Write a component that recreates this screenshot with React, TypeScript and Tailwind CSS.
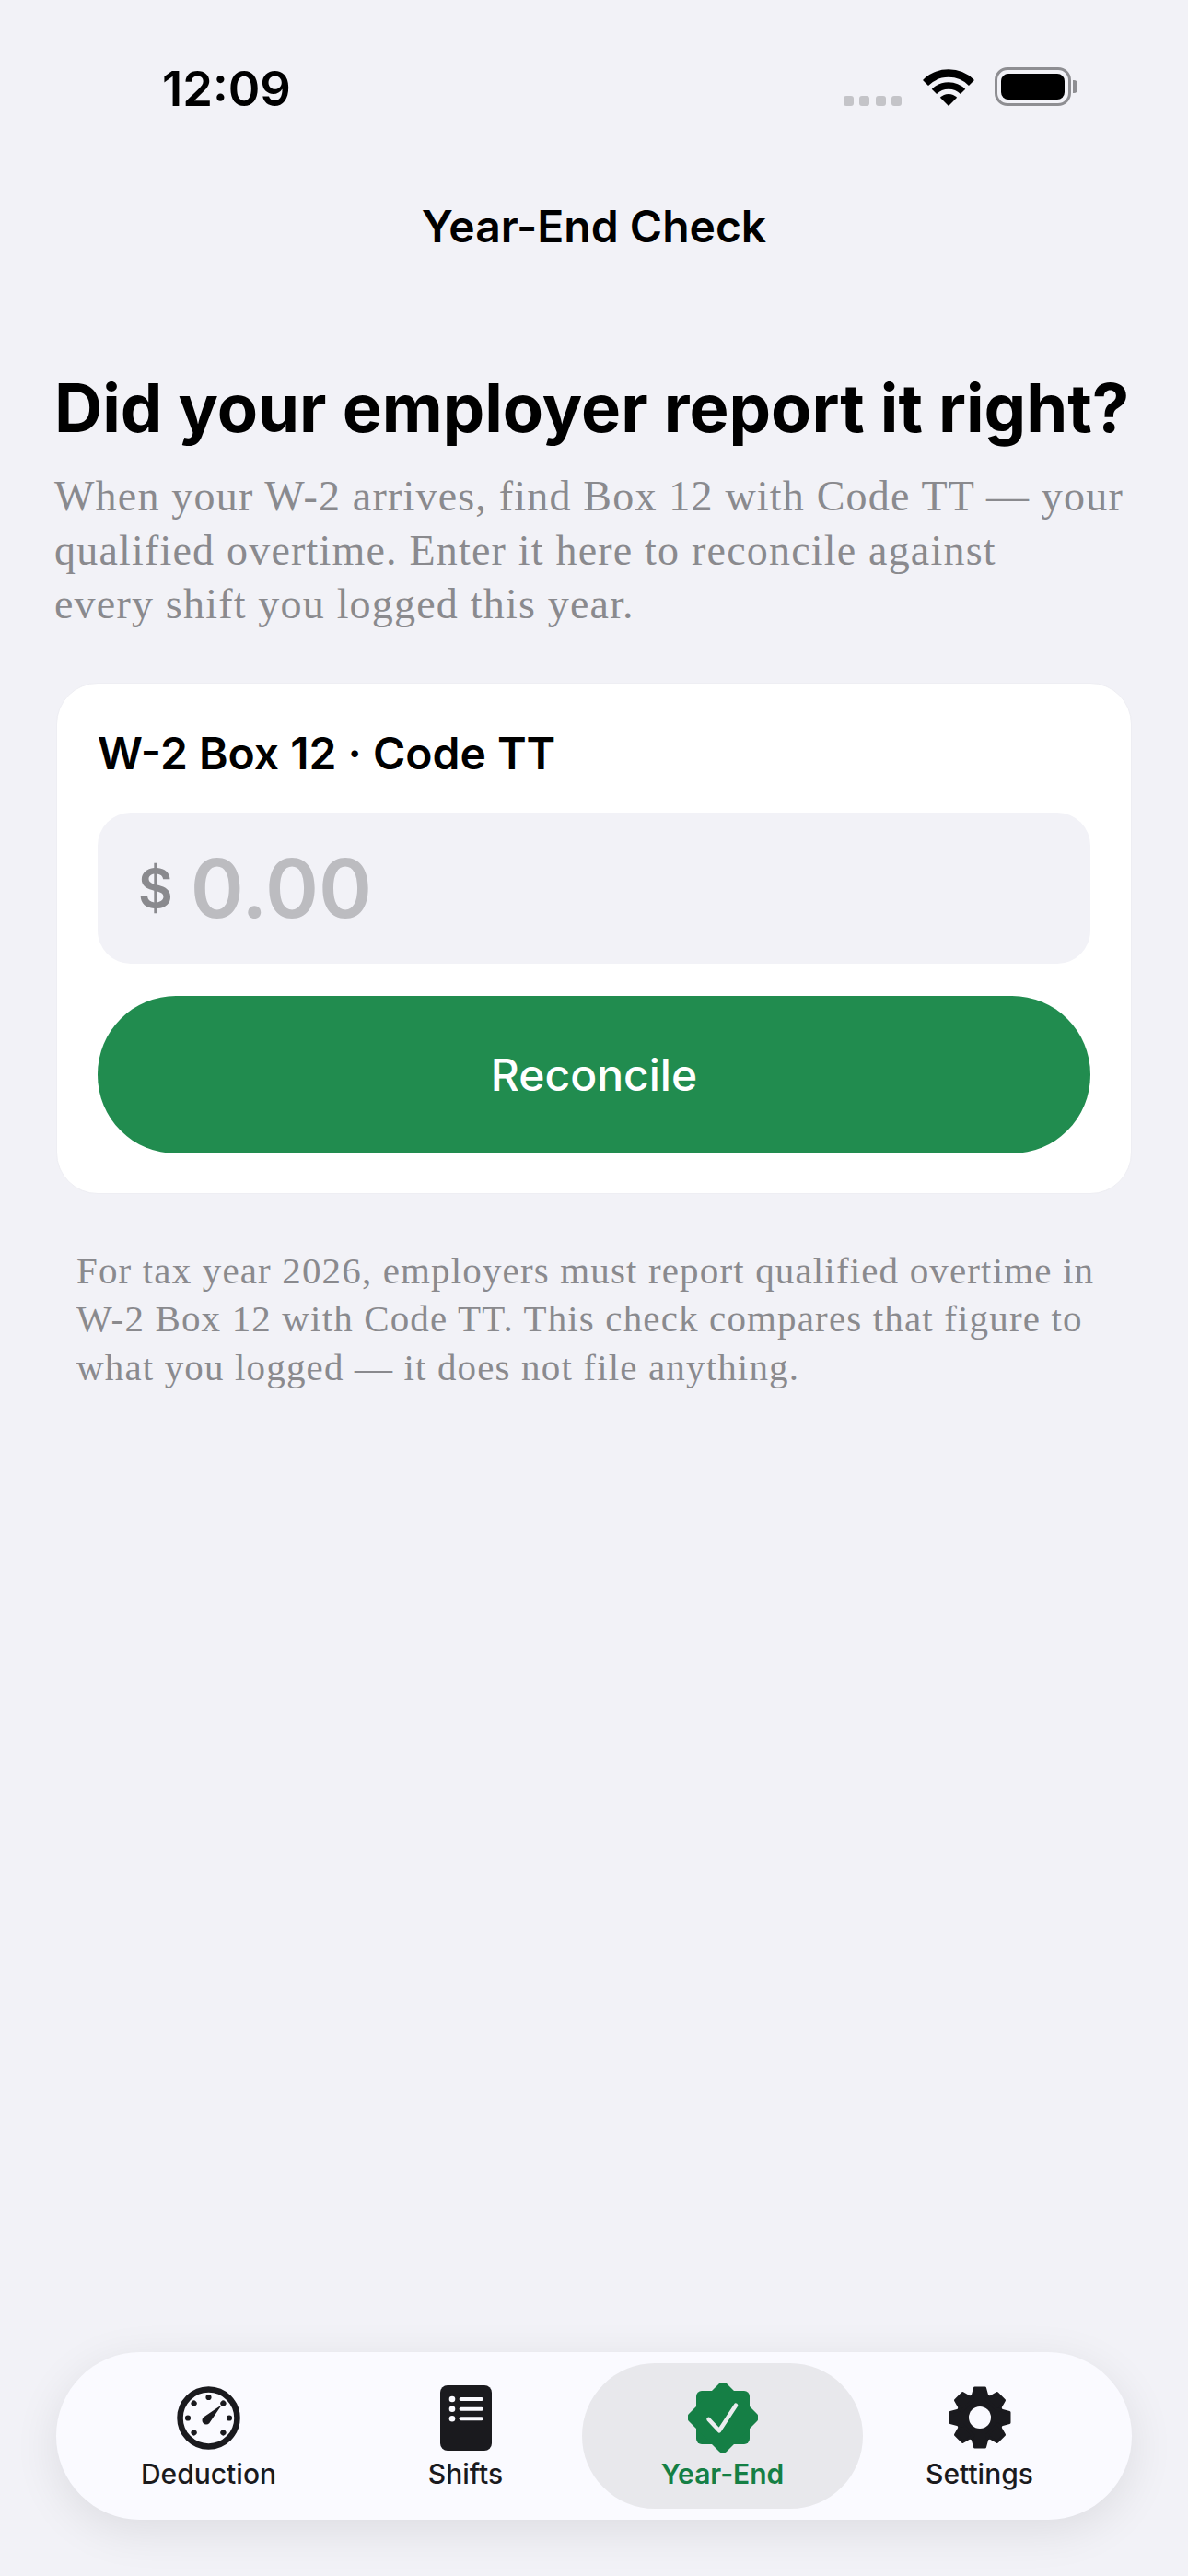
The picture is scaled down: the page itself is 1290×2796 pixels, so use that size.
const sans = "font-['Inter',sans-serif]";

const DIAL_DOTS = [0, 45, 90, 135, 225, 270, 315];
const GEAR_TEETH = [0, 45, 90, 135, 180, 225, 270, 315];

function GaugeIcon() {
  return (
    <svg width="69" height="69" viewBox="0 0 69 69">
      <circle cx="34.5" cy="34.5" r="31" fill="none" stroke="#1a1a1e" strokeWidth="6.5" />
      {DIAL_DOTS.map((a) => (
        <circle key={a} cx="34.5" cy="12" r="3.1" fill="#1a1a1e" transform={`rotate(${a} 34.5 34.5)`} />
      ))}
      <path d="M49 20 L35.2 40.2 A4.5 4.5 0 0 1 28.8 33.8 Z" fill="#1a1a1e" />
    </svg>
  );
}

function ListIcon() {
  return (
    <svg width="56" height="71" viewBox="0 0 56 71">
      <rect width="56" height="71" rx="8" fill="#1a1a1e" />
      {[15, 25.7, 36.3].map((y) => (
        <g key={y}>
          <circle cx="13" cy={y} r="3.3" fill="#fafaff" />
          <rect x="20.6" y={y - 2} width="26.4" height="4" rx="2" fill="#fafaff" />
        </g>
      ))}
    </svg>
  );
}

function BadgeIcon() {
  return (
    <svg width="76" height="76" viewBox="0 0 76 76">
      <rect x="9" y="9" width="58" height="58" rx="6" fill="#157f45" />
      <rect x="9" y="9" width="58" height="58" rx="6" fill="#157f45" transform="rotate(45 38 38)" />
      <path d="M22.5 40 L34 52.3 L52 24.7" fill="none" stroke="#ececef" strokeWidth="4.5" strokeLinecap="round" strokeLinejoin="round" />
    </svg>
  );
}

function GearIcon() {
  return (
    <svg width="70" height="70" viewBox="0 0 70 70">
      <circle cx="35" cy="35" r="26" fill="#1a1a1e" />
      {GEAR_TEETH.map((a) => (
        <path
          key={a}
          d="M26 16 L29.5 3 H40.5 L44 16 Z"
          fill="#1a1a1e"
          stroke="#1a1a1e"
          strokeWidth="3"
          strokeLinejoin="round"
          transform={`rotate(${a} 35 35)`}
        />
      ))}
      <circle cx="35" cy="35" r="12" fill="#fafaff" />
    </svg>
  );
}

function StatusBar() {
  return (
    <div className="flex h-[126px] items-start justify-between pl-[176px] pr-[120px] pt-[65px]">
      <span className={`${sans} text-[52.5px] font-semibold leading-[62px] text-black`}>12:09</span>
      <div className="mt-[8px] flex items-end">
        <div className="flex gap-[6.5px]">
          <span className="h-[11px] w-[11px] rounded-[3px] bg-[#c4c4c8]" />
          <span className="h-[11px] w-[11px] rounded-[3px] bg-[#c4c4c8]" />
          <span className="h-[11px] w-[11px] rounded-[3px] bg-[#c4c4c8]" />
          <span className="h-[11px] w-[11px] rounded-[3px] bg-[#c4c4c8]" />
        </div>
        <svg className="ml-[23px]" width="56" height="41" viewBox="0 0 56 41">
          <path d="M3 15.9 A35.5 35.5 0 0 1 53 15.9" fill="none" stroke="#000" strokeWidth="8.5" />
          <path d="M12.4 25.4 A22 22 0 0 1 43.6 25.4" fill="none" stroke="#000" strokeWidth="7.5" />
          <path d="M28 41 L18.8 31.8 A13 13 0 0 1 37.2 31.8 Z" fill="#000" />
        </svg>
        <div className="ml-[22px] flex items-center">
          <div className="h-[42px] w-[83px] rounded-[14px] border-[3px] border-[#8e8e92] p-[4px]">
            <div className="h-full w-full rounded-[8px] bg-black" />
          </div>
          <span className="ml-[2px] h-[14px] w-[5px] rounded-r-[4px] bg-[#8e8e92]" />
        </div>
      </div>
    </div>
  );
}

function TabBar() {
  return (
    <div className="mx-[61px] mb-[61px] mt-auto grid h-[182px] grid-cols-4 items-stretch rounded-[91px] bg-[#fafaff] px-[26px] py-[12px] shadow-[0_12px_50px_rgba(0,0,0,0.09)]">
      <div className="flex flex-col items-center pt-[21px]">
        <div className="flex h-[76px] items-center"><GaugeIcon /></div>
        <span className={`${sans} mt-[3px] text-[30px] font-medium leading-[40px] text-[#1a1a1e]`}>Deduction</span>
      </div>
      <div className="flex flex-col items-center pt-[21px]">
        <div className="flex h-[76px] items-center"><ListIcon /></div>
        <span className={`${sans} mt-[3px] text-[30px] font-medium leading-[40px] text-[#1a1a1e]`}>Shifts</span>
      </div>
      <div className="-mx-[13px] flex flex-col items-center rounded-[79px] bg-[#e8e8ec] pt-[21px]">
        <div className="flex h-[76px] items-center"><BadgeIcon /></div>
        <span className={`${sans} mt-[3px] text-[30px] font-semibold leading-[40px] text-[#157f45]`}>Year-End</span>
      </div>
      <div className="flex flex-col items-center pt-[21px]">
        <div className="flex h-[76px] items-center"><GearIcon /></div>
        <span className={`${sans} mt-[3px] text-[30px] font-medium leading-[40px] text-[#1a1a1e]`}>Settings</span>
      </div>
    </div>
  );
}

export default function App() {
  return (
    <div className="flex h-[2796px] w-[1290px] flex-col overflow-hidden bg-[#f2f2f7]">
      <StatusBar />
      <h2 className={`${sans} pt-[90px] text-center text-[48px] font-semibold leading-[60px] text-black`}>Year-End Check</h2>

      <div className="px-[59px] pt-[122px]">
        <h1 className={`${sans} whitespace-nowrap text-[72.3px] font-bold leading-[90px] text-black`}>Did your employer report it right?</h1>
        <p className="mt-[22px] font-['Liberation_Serif',serif] text-[46px] leading-[58.5px] tracking-[1.2px] text-[#8a8a8e]">
          When your W-2 arrives, find Box 12 with Code TT — your qualified overtime. Enter it here to reconcile against
          <br />
          every shift you logged this year.
        </p>
      </div>

      <div className="mx-[61px] mt-[55px] rounded-[45px] border border-[#eeeef3] bg-white px-[44px] pb-[43px] pt-[46px]">
        <div className={`${sans} text-[48px] font-semibold leading-[60px] text-black`}>W-2 Box 12 · Code TT</div>
        <div className="mt-[34px] flex h-[164px] items-center gap-[19px] rounded-[36px] bg-[#f2f2f7] px-[44px]">
          <span className={`${sans} text-[58px] font-semibold leading-none text-[#8a8a8e]`}>$</span>
          <span className={`${sans} text-[88px] font-semibold leading-none text-[#bcbcc0]`}>0.00</span>
        </div>
        <div className={`${sans} mt-[35px] flex h-[171px] items-center justify-center rounded-[85px] bg-[#218c4f] pt-[2px] text-[48px] font-medium text-white`}>Reconcile</div>
      </div>

      <p className="mx-[83px] mt-[57px] font-['Liberation_Serif',serif] text-[41px] leading-[52.5px] tracking-[1.15px] text-[#8a8a8e]">
        For tax year 2026, employers must report qualified overtime in W-2 Box 12 with Code TT. This check compares that figure to what you logged — it does not file anything.
      </p>

      <TabBar />
    </div>
  );
}
